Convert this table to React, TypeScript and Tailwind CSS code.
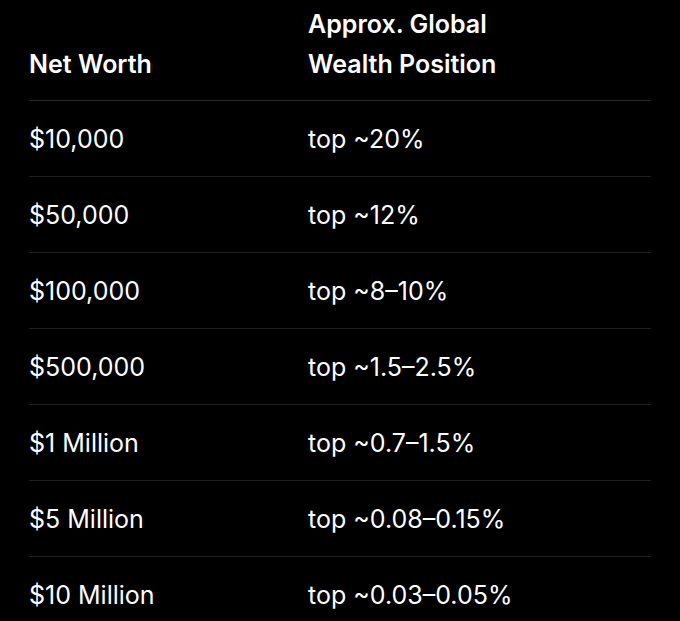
const rows: [string, string][] = [
  ["$10,000", "top ~20%"],
  ["$50,000", "top ~12%"],
  ["$100,000", "top ~8–10%"],
  ["$500,000", "top ~1.5–2.5%"],
  ["$1 Million", "top ~0.7–1.5%"],
  ["$5 Million", "top ~0.08–0.15%"],
  ["$10 Million", "top ~0.03–0.05%"],
]

export default function App() {
  return (
    <div
      className="min-h-screen bg-black text-white px-[29px] overflow-hidden"
      style={{ fontFamily: "Inter, Roboto, sans-serif" }}
    >
      <div className="grid grid-cols-[279px_1fr] items-end border-b border-[#2a2a2a] pb-[16px] text-[25px] font-semibold leading-[40px] h-[101px]">
        <div>Net Worth</div>
        <div>
          Approx. Global
          <br />
          Wealth Position
        </div>
      </div>
      {rows.map(([worth, pos], i) => (
        <div
          key={i}
          className="grid grid-cols-[279px_1fr] items-center h-[76px] pt-[3px] border-b border-[#1f1f1f] text-[25px]"
        >
          <div>{worth}</div>
          <div>{pos}</div>
        </div>
      ))}
    </div>
  )
}
